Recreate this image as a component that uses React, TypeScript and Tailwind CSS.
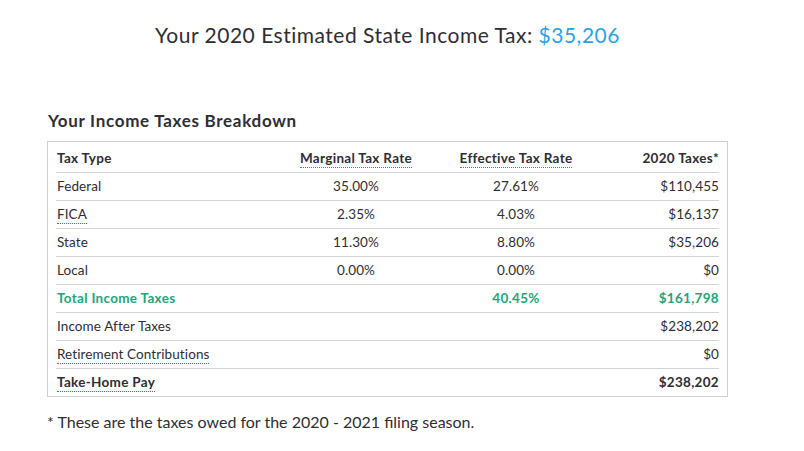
import React from "react";

type Row = {
  label: string;
  marginal?: string;
  effective?: string;
  taxes: string;
  dotted?: boolean;
  kind?: "total" | "bold";
};

const rows: Row[] = [
  { label: "Federal", marginal: "35.00%", effective: "27.61%", taxes: "$110,455" },
  { label: "FICA", marginal: "2.35%", effective: "4.03%", taxes: "$16,137", dotted: true },
  { label: "State", marginal: "11.30%", effective: "8.80%", taxes: "$35,206" },
  { label: "Local", marginal: "0.00%", effective: "0.00%", taxes: "$0" },
  { label: "Total Income Taxes", effective: "40.45%", taxes: "$161,798", kind: "total" },
  { label: "Income After Taxes", taxes: "$238,202" },
  { label: "Retirement Contributions", taxes: "$0", dotted: true },
  { label: "Take-Home Pay", taxes: "$238,202", dotted: true, kind: "bold" },
];

const dot = "border-b border-dotted border-[#1a9c6c] pb-[1px]";
const cols = "grid grid-cols-[220px_160px_160px_1fr] items-center h-[28px] border-b border-[#d4d4d4]";

export default function App() {
  return (
    <div className="min-h-screen bg-white font-['Lato',sans-serif] text-[#2e2e33]">
      <div className="ml-[47px] w-[681px] pt-[22px]">
        <h1 className="text-center text-[21px] leading-[26px] tracking-[0.5px]">
          Your 2020 Estimated State Income Tax:{" "}
          <span className="text-[#2aa3e0]">$35,206</span>
        </h1>

        <h2 className="mt-[62px] pl-[1px] text-[17px] font-bold leading-[22px] tracking-[0.7px]">
          Your Income Taxes Breakdown
        </h2>

        <div className="mt-[9px] border border-[#cfcfcf] px-[8px] pt-[3px] text-[13.5px]">
          <div className={cols + " font-bold tracking-[0.3px]"}>
            <div className="pl-[1px]">Tax Type</div>
            <div className="text-center">
              <span className={dot}>Marginal Tax Rate</span>
            </div>
            <div className="text-center">
              <span className={dot}>Effective Tax Rate</span>
            </div>
            <div className="text-right">2020 Taxes*</div>
          </div>
          {rows.map((r, i) => {
            const last = i === rows.length - 1;
            const tone =
              r.kind === "total"
                ? " font-bold text-[#1fa57a] tracking-[0.3px]"
                : r.kind === "bold"
                ? " font-bold tracking-[0.3px]"
                : " tracking-[0.1px]";
            return (
              <div
                key={r.label}
                className={
                  "grid grid-cols-[220px_160px_160px_1fr] items-center" +
                  (last ? " h-[27px]" : " h-[28px] border-b border-[#d4d4d4]") +
                  tone
                }
              >
                <div className="pl-[1px]">
                  <span className={r.dotted ? dot : ""}>{r.label}</span>
                </div>
                <div className="text-center">{r.marginal}</div>
                <div className="text-center">{r.effective}</div>
                <div className="text-right">{r.taxes}</div>
              </div>
            );
          })}
        </div>

        <p className="mt-[14px] text-[16px] leading-[22px]">
          * These are the taxes owed for the 2020 - 2021 filing season.
        </p>
      </div>
    </div>
  );
}
